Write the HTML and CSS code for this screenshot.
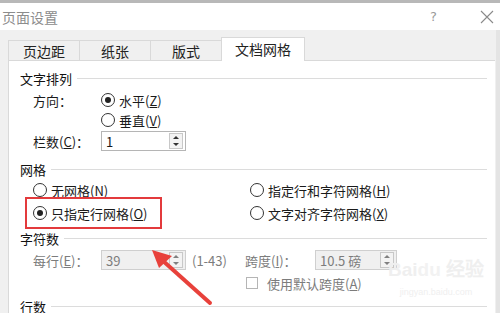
FILE: index.html
```html
<!DOCTYPE html>
<html lang="zh-CN">
<head>
    <meta charset="UTF-8">
    <title>页面设置</title>
    <link rel="stylesheet" href="styles.css">
</head>
<body>
    <div class="dialog">
        <div class="top-edge"></div>
        <div class="titlebar">
            <span class="title">页面设置</span>
            <span class="help">?</span>
            <svg class="close" width="14" height="14" viewBox="0 0 14 14">
                <path d="M1 1 L13 13 M13 1 L1 13" stroke="#8a8a8a" stroke-width="1.1" fill="none"/>
            </svg>
        </div>
        <div class="body-area">
            <div class="tabs">
                <div class="tab">页边距</div>
                <div class="tab">纸张</div>
                <div class="tab">版式</div>
                <div class="tab active">文档网格</div>
            </div>
            <div class="panel">
                <div class="group-head g1"><span>文字排列</span><i></i></div>
                <div class="row r-dir">
                    <span class="label">方向：</span>
                    <span class="radio checked"></span><span>水平(<u>Z</u>)</span>
                </div>
                <div class="row">
                    <span class="label"></span>
                    <span class="radio"></span><span>垂直(<u>V</u>)</span>
                </div>
                <div class="row r-cols">
                    <span class="label">栏数(<u>C</u>)：</span>
                    <div class="spin"><span class="val">1</span><span class="arrows"><b class="up"></b><b class="down"></b></span></div>
                </div>

                <div class="group-head g2"><span>网格</span><i></i></div>
                <div class="grid-opts">
                    <div class="opt"><span class="radio"></span><span>无网格(<u>N</u>)</span></div>
                    <div class="opt"><span class="radio"></span><span>指定行和字符网格(<u>H</u>)</span></div>
                    <div class="opt"><span class="radio checked"></span><span>只指定行网格(<u>O</u>)</span></div>
                    <div class="opt"><span class="radio"></span><span>文字对齐字符网格(<u>X</u>)</span></div>
                </div>

                <div class="group-head g3"><span>字符数</span><i></i></div>
                <div class="row r-chars dim">
                    <span class="label">每行(<u>E</u>)：</span>
                    <div class="spin disabled"><span class="val">39</span><span class="arrows"><b class="up"></b><b class="down"></b></span></div>
                    <span class="range">(1-43)</span>
                    <span class="span-label">跨度(<u>I</u>)：</span>
                    <div class="spin pitch"><span class="val">10.5 磅</span><span class="arrows"><b class="up"></b><b class="down"></b></span></div>
                </div>
                <div class="row r-check dim">
                    <span class="check"></span><span>使用默认跨度(<u>A</u>)</span>
                </div>

                <div class="group-head g4"><span>行数</span><i></i></div>
            </div>
            <div class="scroll-edge"></div>
        </div>

        <div class="mark-box"></div>
        <svg class="arrow" width="80" height="70" viewBox="0 0 80 70">
            <path d="M62 57 L14 14" stroke="#e8413b" stroke-width="4" stroke-linecap="round"/>
            <path d="M4 4 L24 10 L11 22 Z" fill="#e8413b"/>
        </svg>
        <div class="watermark">
            <div class="wm-logo">Bai<span>du</span> 经验</div>
            <div class="wm-url">jingyan.baidu.com</div>
        </div>
    </div>
</body>
</html>
```

FILE: styles.css
```css
html, body {
    margin: 0;
    padding: 0;
    width: 500px;
    height: 313px;
    overflow: hidden;
}
body {
    font-family: "Noto Sans CJK SC", "Noto Sans", sans-serif;
    font-size: 13px;
    color: #1a1a1a;
    background: #f0f0f0;
}
.dialog {
    position: relative;
    width: 500px;
    height: 313px;
}
.top-edge {
    height: 3px;
    background: #b8b8b8;
}
.titlebar {
    height: 27px;
    background: #fff;
    display: flex;
    align-items: center;
    padding-left: 2px;
}
.title {
    font-size: 14px;
    color: #8c8c8c;
    flex: 1;
}
.help {
    font-family: "DejaVu Sans", sans-serif;
    font-size: 13px;
    color: #9a9a9a;
    margin-right: 43px;
}
.close {
    margin-right: 6px;
}
.body-area {
    position: relative;
    height: 283px;
    padding: 7px 0 0 8px;
    box-sizing: border-box;
}
.tabs {
    display: flex;
    align-items: flex-end;
    height: 23px;
}
.tab {
    width: 72px;
    height: 20px;
    line-height: 20px;
    text-align: center;
    font-size: 14px;
    border: 1px solid #d9d9d9;
    border-bottom: none;
    margin-right: -1px;
    background: #f0f0f0;
    box-sizing: border-box;
    color: #222;
}
.tab.active {
    width: 84px;
    height: 24px;
    background: #fff;
    line-height: 22px;
    position: relative;
    z-index: 1;
    margin-bottom: -1px;
}
.panel {
    background: #fff;
    border-left: 1px solid #d9d9d9;
    border-top: 1px solid #d9d9d9;
    width: 487px;
    height: 260px;
    box-sizing: border-box;
    padding: 0 0 0 11px;
}
.scroll-edge {
    position: absolute;
    right: 0;
    top: 0;
    width: 4px;
    height: 283px;
    background: #e4e4e4;
}
.group-head {
    display: flex;
    align-items: center;
    height: 16px;
    font-size: 13px;
    color: #111;
    padding-right: 8px;
}
.group-head i {
    flex: 1;
    height: 1px;
    background: #dcdcdc;
    margin-left: 5px;
}
.g1 { margin-top: 9px; }
.g2 { margin-top: 10px; }
.g3 { margin-top: 7px; }
.g4 { margin-top: 5px; }
.row {
    display: flex;
    align-items: center;
    height: 20px;
    padding-left: 13px;
}
.r-dir { margin-top: 4px; }
.r-cols { margin-top: 1px; }
.r-chars { margin-top: 4px; }
.r-check { margin-top: 3px; padding-left: 226px; }
.label {
    width: 68px;
    flex: none;
}
u { text-decoration: underline; }
.radio {
    width: 12px;
    height: 12px;
    border: 1px solid #333;
    border-radius: 50%;
    background: #fff;
    margin-right: 4px;
    flex: none;
    position: relative;
}
.radio.checked::after {
    content: "";
    position: absolute;
    left: 3px;
    top: 3px;
    width: 6px;
    height: 6px;
    border-radius: 50%;
    background: #222;
}
.spin {
    width: 85px;
    height: 20px;
    border: 1px solid #b5b5b5;
    box-sizing: border-box;
    display: flex;
    align-items: center;
    background: #fff;
}
.spin .val {
    flex: 1;
    padding-left: 4px;
    font-size: 13px;
}
.spin.disabled, .spin.pitch {
    background: #f0f0f0;
    border-color: #cfcfcf;
}
.pitch {
    width: 82px;
    margin-left: 0;
}
.arrows {
    width: 14px;
    height: 16px;
    margin-right: 2px;
    border: 1px solid #c8c8c8;
    box-sizing: border-box;
    display: flex;
    flex-direction: column;
    align-items: center;
    justify-content: space-around;
    background: #f3f3f3;
}
.arrows b {
    width: 0;
    height: 0;
    border-left: 3px solid transparent;
    border-right: 3px solid transparent;
}
.arrows .up { border-bottom: 3px solid #333; }
.arrows .down { border-top: 3px solid #333; }
.dim { color: #7c7c7c; }
.dim .arrows b { opacity: 0.6; }
.range {
    margin-left: 6px;
    width: 53px;
}
.span-label {
    width: 70px;
}
.grid-opts {
    display: grid;
    grid-template-columns: 217px 1fr;
    row-gap: 3px;
    margin-top: 3px;
    padding-left: 13px;
}
.opt {
    display: flex;
    align-items: center;
    height: 20px;
}
.check {
    width: 10px;
    height: 10px;
    border: 1px solid #b5b5b5;
    margin-right: 9px;
    background: #fff;
}
.mark-box {
    position: absolute;
    left: 25px;
    top: 197px;
    width: 137px;
    height: 32px;
    border: 2px solid #e33a3c;
    box-sizing: border-box;
}
.arrow {
    position: absolute;
    left: 148px;
    top: 246px;
}
.watermark {
    position: absolute;
    left: 388px;
    top: 254px;
    color: #efefef;
    text-align: center;
    font-family: "Liberation Sans", sans-serif;
}
.wm-logo {
    font-size: 19px;
    font-weight: bold;
}
.wm-logo span { color: #f2f2f2; }
.wm-url {
    font-size: 9px;
    margin-top: 6px;
}
```
